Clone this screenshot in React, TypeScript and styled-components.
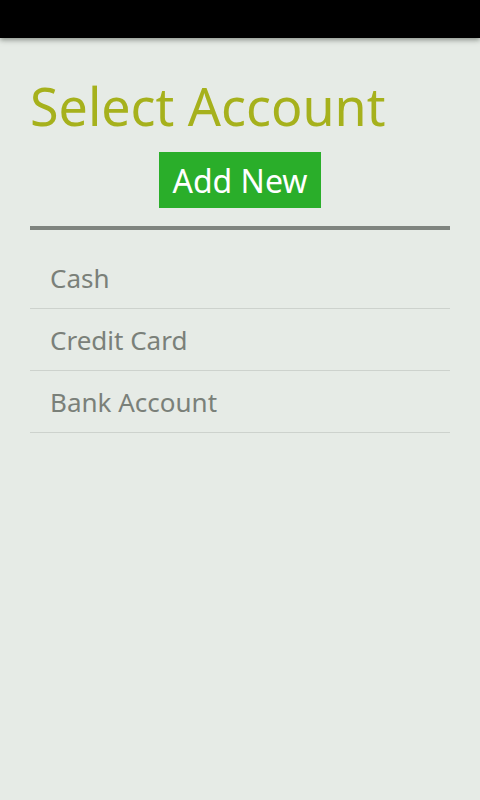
import React from "react";
import styled, { createGlobalStyle } from "styled-components";

const accounts = ["Cash", "Credit Card", "Bank Account"];

export default function App() {
  return (
    <>
      <GlobalStyle />
      <Screen>
        <StatusBar />
        <Content>
          <Title>Select Account</Title>
          <ButtonRow>
            <AddButton>Add New</AddButton>
          </ButtonRow>
          <Divider />
          <List>
            {accounts.map((name) => (
              <Item key={name}>{name}</Item>
            ))}
          </List>
        </Content>
      </Screen>
    </>
  );
}

const GlobalStyle = createGlobalStyle`
  html, body {
    margin: 0;
    padding: 0;
    background: #e6ebe6;
    font-family: "Noto Sans", "Open Sans", sans-serif;
  }
`;

const Screen = styled.div`
  width: 480px;
  height: 800px;
  display: flex;
  flex-direction: column;
  background: #e6ebe6;
  overflow: hidden;
`;

const StatusBar = styled.div`
  height: 38px;
  background: #000;
  box-shadow: 0 2px 5px rgba(60, 70, 60, 0.55);
  position: relative;
  z-index: 1;
`;

const Content = styled.div`
  display: flex;
  flex-direction: column;
  padding: 0 30px;
`;

const Title = styled.h1`
  margin: 30px 0 0;
  font-size: 52px;
  font-weight: 400;
  line-height: 76px;
  color: #a6b11c;
`;

const ButtonRow = styled.div`
  display: flex;
  justify-content: center;
  margin-top: 8px;
`;

const AddButton = styled.button`
  height: 56px;
  width: 162px;
  border: none;
  background: #2aae2a;
  color: #fff;
  font-family: inherit;
  font-size: 32px;
  padding: 0;
`;

const Divider = styled.div`
  height: 4px;
  background: #7f847f;
  margin-top: 18px;
`;

const List = styled.ul`
  list-style: none;
  margin: 17px 0 0;
  padding: 0;
`;

const Item = styled.li`
  height: 61px;
  display: flex;
  align-items: center;
  padding-left: 20px;
  font-size: 26px;
  color: #7a8079;
  border-bottom: 1px solid #cdd2cd;
`;
